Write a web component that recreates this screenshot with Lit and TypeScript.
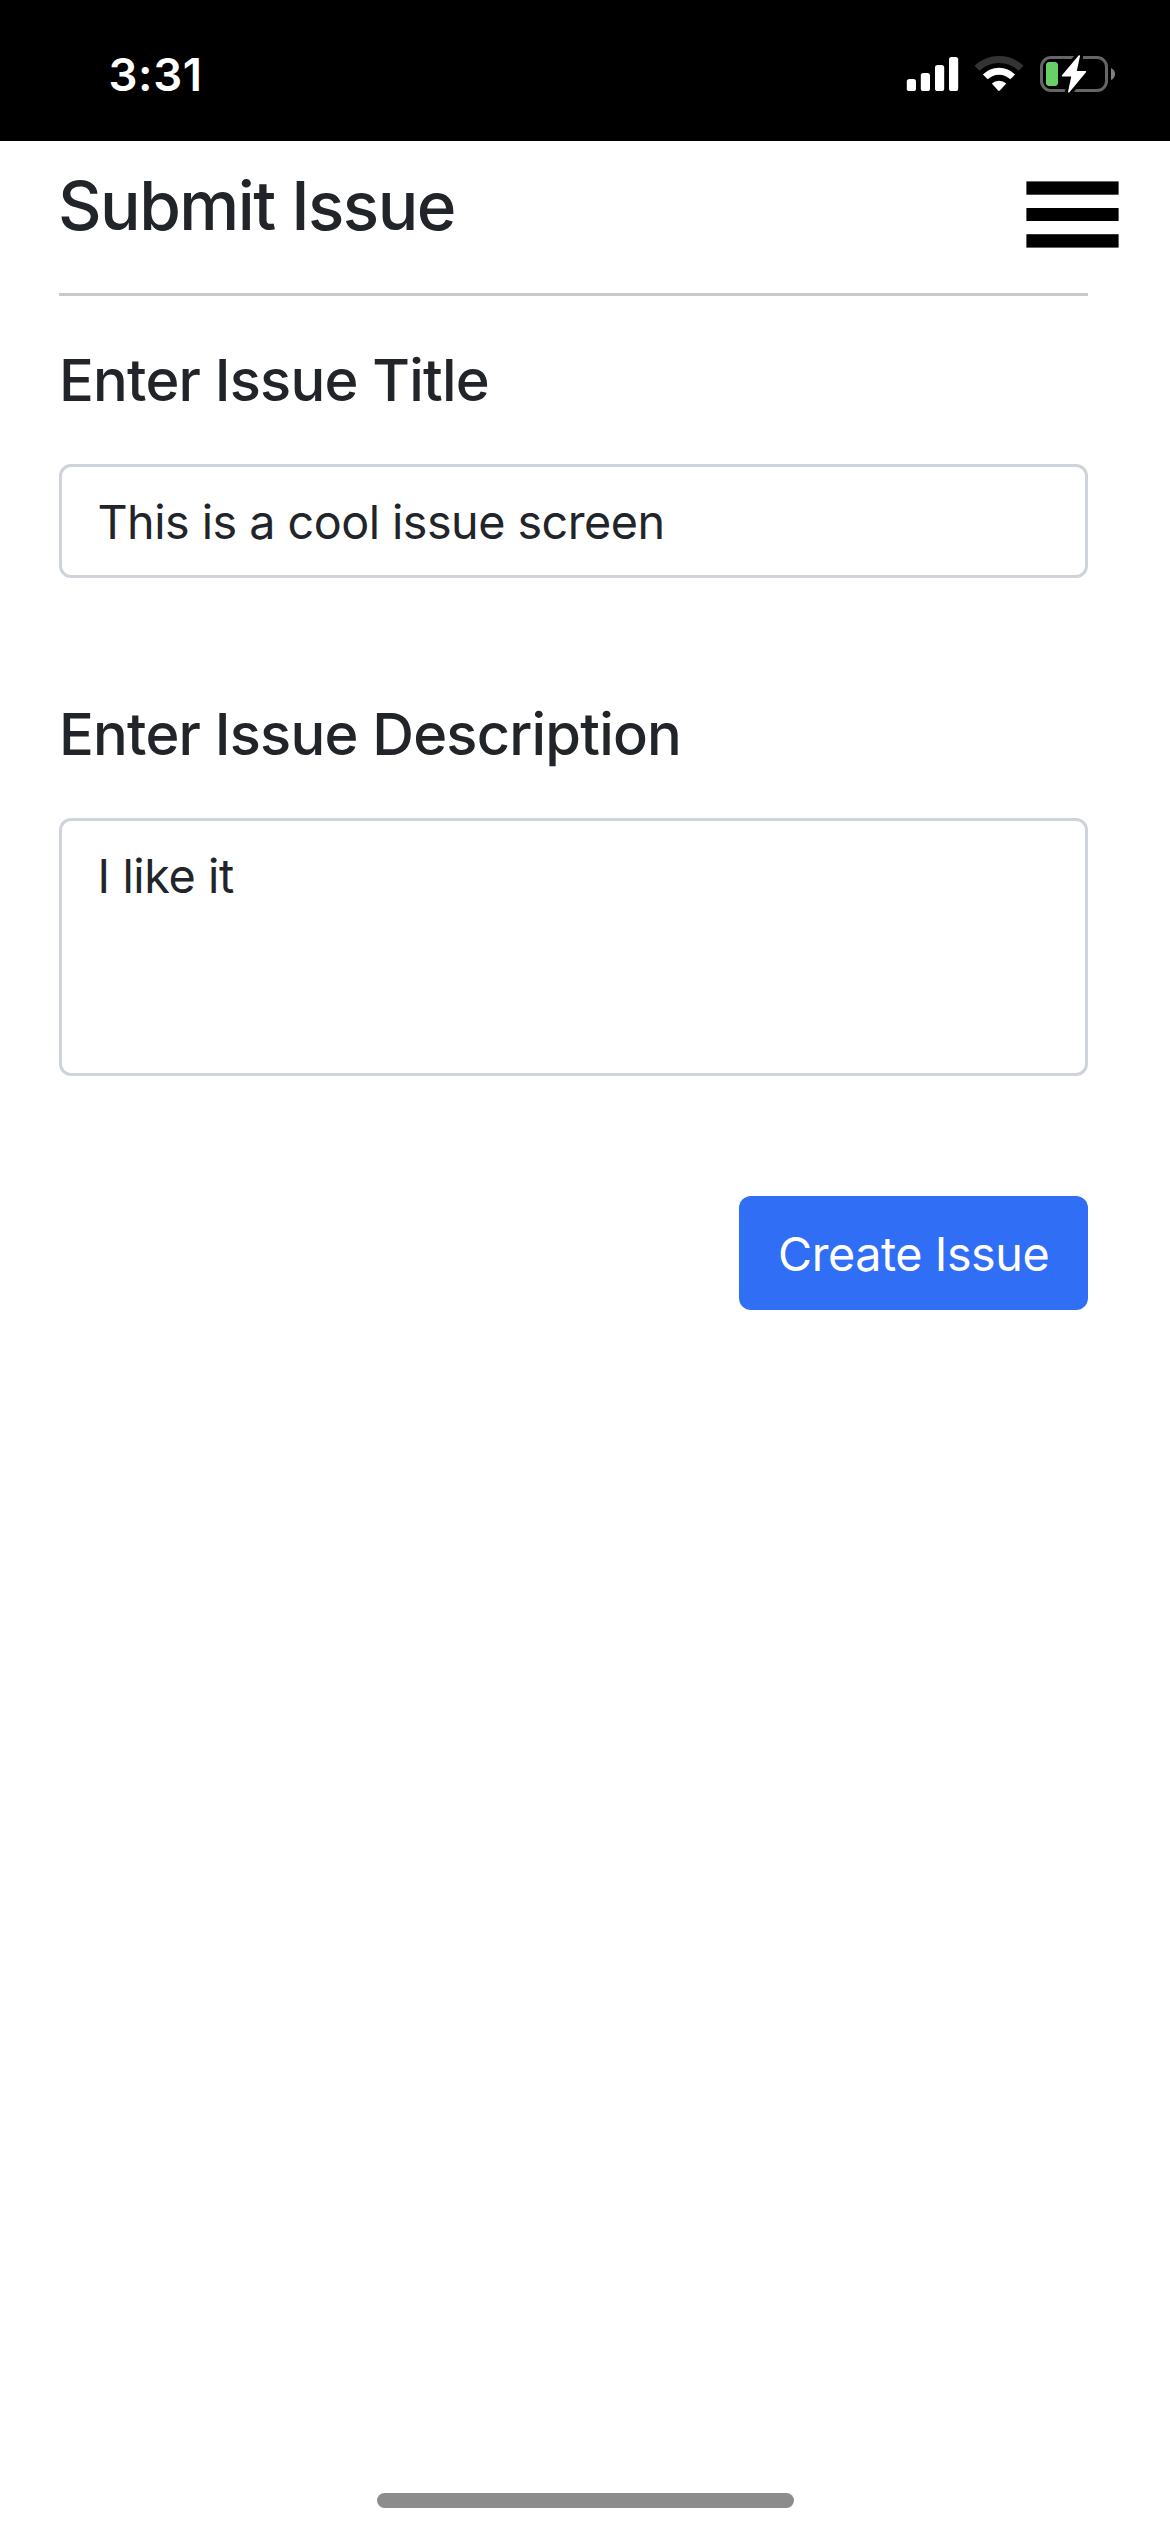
import { LitElement, html, css } from "lit";

class StatusBar extends LitElement {
  static styles = css`
    :host {
      display: flex;
      justify-content: space-between;
      align-items: flex-start;
      box-sizing: border-box;
      height: 141px;
      padding: 44px 40px 0 108.5px;
      background: #000;
      color: #fff;
    }
    .time {
      margin-top: 3px;
      font-size: 45.5px;
      line-height: 55px;
      font-weight: 600;
      letter-spacing: 0.6px;
    }
    .icons {
      display: block;
    }
  `;

  render() {
    return html`
      <div class="time">3:31</div>
      <svg class="icons" width="230" height="60" viewBox="900 44 230 60">
        <g fill="#fff">
          <rect x="906.8" y="79" width="9.2" height="12" rx="2.6" />
          <rect x="920.8" y="73" width="9.2" height="18" rx="2.6" />
          <rect x="935" y="65" width="9.2" height="26" rx="2.6" />
          <rect x="949" y="57" width="9.2" height="34" rx="2.6" />
        </g>
        <path d="M976.9 68.3A32 32 0 0 1 1021.1 68.3" fill="none" stroke="#333" stroke-width="7" />
        <path d="M985.3 76.9A19.4 19.4 0 0 1 1012.7 76.9" fill="none" stroke="#fff" stroke-width="6.8" />
        <path d="M991.8 83.6A10.3 10.3 0 0 1 1006.2 83.6L999.9 90.6Q999 91.5 998.1 90.6Z" fill="#fff" />
        <rect x="1041.5" y="57.5" width="65" height="33" rx="9.5" fill="none" stroke="#666" stroke-width="3" />
        <path d="M1111 68Q1115 70 1115 74T1111 80Z" fill="#808080" />
        <rect x="1046" y="62" width="12" height="24" rx="4" fill="#68ce67" />
        <path
          d="M1079.2 56L1062.6 75.8H1072.2L1068.8 91.8L1085.4 71.8H1075.8Z"
          fill="#000" stroke="#000" stroke-width="8" stroke-linejoin="round"
        />
        <path
          d="M1079.2 56L1062.6 75.8H1072.2L1068.8 91.8L1085.4 71.8H1075.8Z"
          fill="#fff" stroke="#fff" stroke-width="1.6" stroke-linejoin="round"
        />
        <rect x="1046" y="62" width="12" height="24" rx="4" fill="#68ce67" />
      </svg>
    `;
  }
}
customElements.define("status-bar", StatusBar);

class AppRoot extends LitElement {
  static styles = css`
    :host {
      display: flex;
      flex-direction: column;
      box-sizing: border-box;
      width: 1170px;
      height: 2532px;
      background: #fff;
      color: #212529;
      font-family: Inter, "Liberation Sans", sans-serif;
    }
    .header {
      display: flex;
      justify-content: space-between;
      align-items: flex-start;
      height: 152px;
      box-sizing: border-box;
      padding: 25px 51px 0 58px;
    }
    h1, h2 {
      margin: 0;
      font-weight: 500;
      white-space: nowrap;
    }
    h1 {
      font-size: 67.5px;
      line-height: 80px;
      letter-spacing: -1.53px;
    }
    .menu {
      display: block;
      margin-top: 15px;
    }
    .form {
      display: flex;
      flex-direction: column;
      width: 1029px;
      margin-left: 59px;
    }
    .rule {
      height: 3px;
      background: #c8c9ca;
      margin-bottom: 49px;
    }
    h2 {
      font-size: 57.8px;
      line-height: 70px;
      letter-spacing: -0.78px;
      margin-bottom: 49px;
    }
    .field {
      box-sizing: border-box;
      border: 3px solid #ced4da;
      border-radius: 12px;
      padding: 2px 35.5px 0;
      font-size: 46.7px;
      letter-spacing: -0.52px;
    }
    .single {
      height: 114px;
      line-height: 106px;
      margin-bottom: 121px;
    }
    .multi {
      height: 258px;
      padding-top: 19px;
      line-height: 72px;
      letter-spacing: -0.37px;
      margin-bottom: 120px;
    }
    .submit {
      align-self: flex-end;
      box-sizing: border-box;
      width: 349px;
      height: 114px;
      border: 0;
      border-radius: 12px;
      padding: 2px 0 0 39px;
      background: #316ef6;
      color: #fff;
      font: 400 46.7px/112px Inter, "Liberation Sans", sans-serif;
      letter-spacing: -0.45px;
      text-align: left;
      white-space: nowrap;
    }
    .home {
      align-self: center;
      width: 417px;
      height: 15px;
      margin: auto 0 24px;
      border-radius: 8px;
      background: #8c8c8c;
    }
  `;

  render() {
    return html`
      <status-bar></status-bar>
      <div class="header">
        <h1>Submit Issue</h1>
        <svg class="menu" width="93" height="67" viewBox="0 0 93 67">
          <rect x="0.4" y="0.4" width="92.2" height="13.3" />
          <rect x="0.4" y="27" width="92.2" height="13" />
          <rect x="0.4" y="53.2" width="92.2" height="13.4" />
        </svg>
      </div>
      <div class="form">
        <div class="rule"></div>
        <h2>Enter Issue Title</h2>
        <div class="field single">This is a cool issue screen</div>
        <h2>Enter Issue Description</h2>
        <div class="field multi">I like it</div>
        <button class="submit">Create Issue</button>
      </div>
      <div class="home"></div>
    `;
  }
}
customElements.define("app-root", AppRoot);
